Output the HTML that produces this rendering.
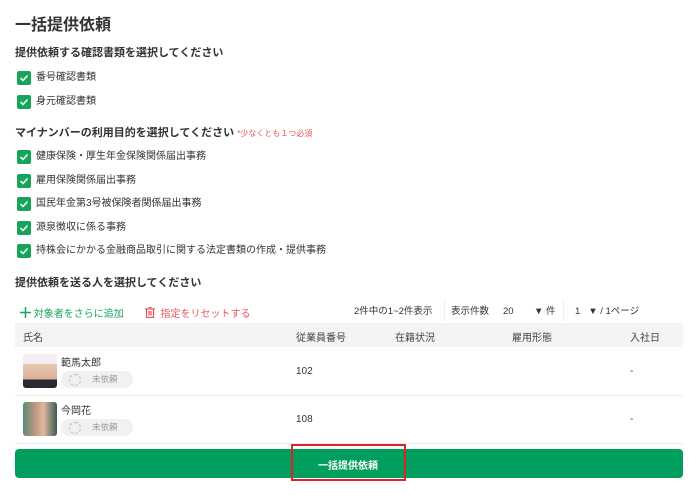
<!DOCTYPE html>
<html><head><meta charset="utf-8"><style>
*{margin:0;padding:0;box-sizing:border-box}
body{width:698px;height:495px;background:#fff;font-family:"Liberation Sans","Noto Sans CJK JP",sans-serif;color:#333;position:relative;overflow:hidden}
.a{position:absolute;white-space:nowrap}
.h1{left:15px;top:11px;font-size:16px;font-weight:bold;color:#333}
.h2{left:15px;font-size:11px;font-weight:bold;color:#333}
.cb{position:absolute;left:17px;width:14px;height:14px;background:#17a55c;border-radius:2px}
.cb svg{position:absolute;left:2px;top:2px}
.lb{position:absolute;left:36px;font-size:10px;color:#333;line-height:14px}
.th{font-size:10px;color:#444;top:329px}
.tb{font-size:9.5px;color:#333;top:305px;line-height:14px}
.av{position:absolute;left:23px;width:34px;height:34px;border-radius:3px}
.st{position:absolute;left:61px;width:72px;height:17px;background:#f1f1f1;border-radius:9px;font-size:8.5px;color:#999;line-height:17px;padding-left:31px}
.st:before{content:"";position:absolute;left:8px;top:3px;width:10px;height:10px;border:1px dashed #bbb;border-radius:50%}
</style></head><body>
<div class="a h1">一括提供依頼</div>
<div class="a h2" style="top:44px">提供依頼する確認書類を選択してください</div>
<div class="cb" style="top:71px"><svg width="10" height="10"><path d="M1.5 5l2.5 2.5 4.5-5" stroke="#fff" stroke-width="1.5" fill="none"/></svg></div><div class="lb" style="top:71px">番号確認書類</div>
<div class="cb" style="top:95px"><svg width="10" height="10"><path d="M1.5 5l2.5 2.5 4.5-5" stroke="#fff" stroke-width="1.5" fill="none"/></svg></div><div class="lb" style="top:95px">身元確認書類</div>
<div class="a h2" style="top:124px">マイナンバーの利用目的を選択してください <span style="color:#e8575a;font-weight:normal;font-size:8px">*少なくとも１つ必須</span></div>
<div class="cb" style="top:150px"><svg width="10" height="10"><path d="M1.5 5l2.5 2.5 4.5-5" stroke="#fff" stroke-width="1.5" fill="none"/></svg></div><div class="lb" style="top:150px">健康保険・厚生年金保険関係届出事務</div>
<div class="cb" style="top:174px"><svg width="10" height="10"><path d="M1.5 5l2.5 2.5 4.5-5" stroke="#fff" stroke-width="1.5" fill="none"/></svg></div><div class="lb" style="top:174px">雇用保険関係届出事務</div>
<div class="cb" style="top:197px"><svg width="10" height="10"><path d="M1.5 5l2.5 2.5 4.5-5" stroke="#fff" stroke-width="1.5" fill="none"/></svg></div><div class="lb" style="top:197px">国民年金第3号被保険者関係届出事務</div>
<div class="cb" style="top:221px"><svg width="10" height="10"><path d="M1.5 5l2.5 2.5 4.5-5" stroke="#fff" stroke-width="1.5" fill="none"/></svg></div><div class="lb" style="top:221px">源泉徴収に係る事務</div>
<div class="cb" style="top:244px"><svg width="10" height="10"><path d="M1.5 5l2.5 2.5 4.5-5" stroke="#fff" stroke-width="1.5" fill="none"/></svg></div><div class="lb" style="top:244px">持株会にかかる金融商品取引に関する法定書類の作成・提供事務</div>
<div class="a h2" style="top:274px">提供依頼を送る人を選択してください</div>

<div class="a" style="left:20px;top:305px;font-size:10px;color:#17a55c">
<svg width="11" height="11" style="vertical-align:-1px"><path d="M5.5 0v11M0 5.5h11" stroke="#17a55c" stroke-width="1.5"/></svg>&nbsp;対象者をさらに追加</div>
<div class="a" style="left:145px;top:305px;font-size:10px;color:#e8575a">
<svg width="10" height="11" style="vertical-align:-1px"><path d="M0 2h10M3.5 0.5h3M1.5 2v8.5h7V2M4 4v4.5M6 4v4.5" stroke="#e8575a" stroke-width="1.3" fill="none"/></svg>&nbsp;&nbsp;指定をリセットする</div>
<div class="a tb" style="left:354px">2件中の1~2件表示</div>
<div class="a" style="left:444px;top:299px;width:1px;height:22px;background:#eee"></div>
<div class="a tb" style="left:451px">表示件数</div>
<div class="a tb" style="left:503px">20</div>
<div class="a tb" style="left:534px">▼ 件</div>
<div class="a" style="left:563px;top:299px;width:1px;height:22px;background:#eee"></div>
<div class="a tb" style="left:575px">1&nbsp;&nbsp;&nbsp;▼ / 1ページ</div>

<div class="a" style="left:15px;top:323px;width:668px;height:24px;background:#f4f4f4"></div>
<div class="a th" style="left:23px">氏名</div>
<div class="a th" style="left:296px">従業員番号</div>
<div class="a th" style="left:395px">在籍状況</div>
<div class="a th" style="left:512px">雇用形態</div>
<div class="a th" style="left:630px">入社日</div>

<div class="a" style="left:15px;top:395px;width:668px;height:1px;background:#eee"></div>
<div class="a" style="left:15px;top:443px;width:668px;height:1px;background:#eee"></div>

<div class="av" style="top:354px;background:linear-gradient(#f3eef2 0,#f3eef2 30%,#e8c9b0 30%,#d8b096 75%,#2a2a33 75%)"></div>
<div class="a" style="left:61px;top:354px;font-size:10px;color:#333">範馬太郎</div>
<div class="st" style="top:371px">未依頼</div>
<div class="a" style="left:296px;top:366px;font-size:10px">102</div>
<div class="a" style="left:630px;top:366px;font-size:10px">-</div>

<div class="av" style="top:402px;background:linear-gradient(90deg,#5a8a7a,#c79a80 40%,#e0b8a0 60%,#3a5a50)"></div>
<div class="a" style="left:61px;top:402px;font-size:10px;color:#333">今岡花</div>
<div class="st" style="top:419px">未依頼</div>
<div class="a" style="left:296px;top:414px;font-size:10px">108</div>
<div class="a" style="left:630px;top:414px;font-size:10px">-</div>

<div class="a" style="left:15px;top:449px;width:668px;height:29px;background:#009f5e;border-radius:4px"></div>
<div class="a" style="left:291px;top:444px;width:115px;height:37px;border:2px solid #e0202a"></div>
<div class="a" style="left:318px;top:457px;font-size:10px;font-weight:bold;color:#fff">一括提供依頼</div>
</body></html>
